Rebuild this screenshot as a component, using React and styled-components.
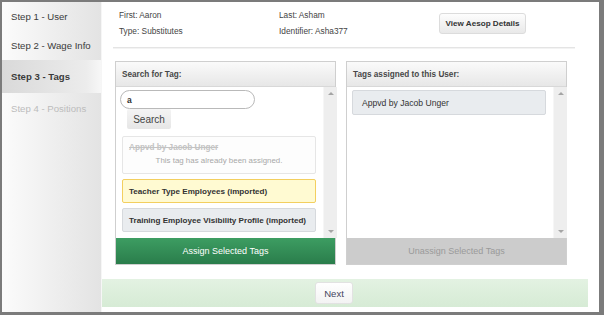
import React from "react";
import styled, { createGlobalStyle } from "styled-components";

const Global = createGlobalStyle`
  html, body { margin: 0; padding: 0; background: #fff; }
  * { box-sizing: border-box; }
  body { font-family: "Liberation Sans", Arial, sans-serif; }
`;

const Frame = styled.div`
  width: 604px;
  height: 315px;
  border-style: solid;
  border-color: #7b7b7b;
  border-width: 2px 5px 3px 2px;
  display: flex;
  background: #fff;
  overflow: hidden;
`;

const Sidebar = styled.nav`
  width: 100px;
  flex: none;
  background: linear-gradient(to right, #fbfbfb, #e3e3e3);
  border-right: 1px solid #f6f6f6;
  display: flex;
  flex-direction: column;
`;

const Step = styled.div`
  height: ${(p) => p.$h}px;
  padding-left: 9px;
  display: flex;
  align-items: center;
  font-size: 9.6px;
  color: ${(p) => (p.$disabled ? "#bcbcbc" : "#3a3a3a")};
  font-weight: ${(p) => (p.$active ? "bold" : "normal")};
  background: ${(p) =>
    p.$active ? "linear-gradient(to right, #d9d9d9, #ececec 85%, #f7f7f7)" : "transparent"};
`;

const Main = styled.main`
  flex: 1;
  display: flex;
  flex-direction: column;
  min-width: 0;
`;

const Info = styled.div`
  display: flex;
  align-items: flex-start;
  padding: 5px 0 0 17px;
`;

const InfoCol = styled.div`
  width: 160px;
  font-size: 8.3px;
  line-height: 16px;
  color: #444;
`;

const DetailsButton = styled.button`
  margin-top: 6px;
  width: 87px;
  height: 21px;
  padding: 0;
  font-family: inherit;
  font-size: 8.1px;
  font-weight: bold;
  color: #333;
  background: linear-gradient(#fdfdfd, #e9e9e9);
  border: 1px solid #dcdcdc;
  border-radius: 3px;
`;

const Separator = styled.div`
  margin: 8px 24px 0 11px;
  height: 2px;
  background: #e4e4e4;
  border-bottom: 1px solid #f3f3f3;
`;

const Panels = styled.div`
  display: flex;
  gap: 10px;
  padding-left: 13px;
  margin-top: 12px;
`;

const Panel = styled.section`
  width: 221px;
  height: 204px;
  border: 1px solid #cfcfcf;
  display: flex;
  flex-direction: column;
  background: #fff;
`;

const PanelHeader = styled.div`
  height: 25px;
  flex: none;
  padding-left: 6px;
  display: flex;
  align-items: center;
  font-size: 8.2px;
  font-weight: bold;
  color: #474747;
  background: linear-gradient(#fafafa, #e7e7e7);
  border-bottom: 1px solid #d8d8d8;
`;

const PanelBody = styled.div`
  flex: 1;
  display: flex;
  min-height: 0;
`;

const List = styled.div`
  flex: 1;
  display: flex;
  flex-direction: column;
  align-items: flex-start;
  padding: 3px 7px 0 ${(p) => p.$pl}px;
`;

const Scrollbar = styled.div`
  width: 14px;
  flex: none;
  background: #eeeeee;
  border-left: 1px solid #f6f6f6;
  display: flex;
  flex-direction: column;
  justify-content: space-between;
  align-items: center;
  padding: 5px 0 5px;
`;

const Arrow = styled.div`
  width: 0;
  height: 0;
  border-left: 3px solid transparent;
  border-right: 3px solid transparent;
  ${(p) =>
    p.$down ? "border-top: 3px solid #a5a5a5;" : "border-bottom: 3px solid #a5a5a5;"}
`;

const SearchInput = styled.div`
  width: 135px;
  height: 19px;
  border: 1px solid #b9b9b9;
  border-radius: 10px;
  padding-left: 6px;
  display: flex;
  align-items: center;
  font-size: 8.5px;
  font-weight: bold;
  color: #333;
  background: #fff;
`;

const SearchButton = styled.button`
  margin-left: 7px;
  width: 44px;
  height: 20px;
  padding: 0;
  font-family: inherit;
  font-size: 10px;
  color: #444;
  background: linear-gradient(#f4f4f4, #e6e6e6);
  border: none;
  border-radius: 2px;
`;

const DisabledTag = styled.div`
  margin: 7px 0 0 2px;
  width: 194px;
  height: 38px;
  border: 1px solid #e6e6e6;
  border-radius: 2px;
  background: #fdfdfd;
  padding: 6px 0 0 6px;
  font-size: 8.2px;
  color: #bdbdbd;
`;

const Struck = styled.div`
  font-weight: bold;
  text-decoration: line-through;
  color: #c3c3c3;
`;

const Note = styled.div`
  margin-top: 4px;
  text-align: center;
  padding-right: 6px;
  color: #a8a8a8;
  font-size: 7.9px;
`;

const Tag = styled.div`
  margin: ${(p) => p.$mt}px 0 0 ${(p) => p.$ml}px;
  width: 194px;
  height: ${(p) => p.$h}px;
  border: 1px solid ${(p) => (p.$selected ? "#f3cf5f" : "#d6d9dd")};
  border-radius: 2px;
  background: ${(p) => (p.$selected ? "#fffad2" : "#e9ecef")};
  padding-left: ${(p) => p.$pl}px;
  display: flex;
  align-items: center;
  font-size: ${(p) => (p.$bold ? "8.1px" : "8.6px")};
  font-weight: ${(p) => (p.$bold ? "bold" : "normal")};
  color: #333;
`;

const ActionButton = styled.button`
  height: 26px;
  flex: none;
  width: 100%;
  padding: 0;
  border: none;
  font-family: inherit;
  font-size: 9px;
  color: ${(p) => (p.$primary ? "#ffffff" : "#9a9a9a")};
  background: ${(p) =>
    p.$primary ? "linear-gradient(#3d9d62, #2a7d4b)" : "#cccccc"};
`;

const Footer = styled.div`
  margin: 14px 11px 0 0;
  height: 28px;
  background: linear-gradient(#e3f2e2, #d6ebd5);
  display: flex;
  align-items: center;
  padding-left: 213px;
`;

const NextButton = styled.button`
  width: 38px;
  height: 22px;
  padding: 0;
  font-family: inherit;
  font-size: 9.6px;
  color: #454560;
  background: linear-gradient(#ffffff, #f3f3f3);
  border: 1px solid #e2e2e2;
  border-radius: 3px;
`;

export default function App() {
  return (
    <>
      <Global />
      <Frame>
        <Sidebar>
          <Step $h={28}>Step 1 - User</Step>
          <Step $h={30}>Step 2 - Wage Info</Step>
          <Step $h={33} $active>Step 3 - Tags</Step>
          <Step $h={31} $disabled>Step 4 - Positions</Step>
        </Sidebar>
        <Main>
          <Info>
            <InfoCol>
              <div>First: Aaron</div>
              <div>Type: Substitutes</div>
            </InfoCol>
            <InfoCol>
              <div>Last: Asham</div>
              <div>Identifier: Asha377</div>
            </InfoCol>
            <DetailsButton>View Aesop Details</DetailsButton>
          </Info>
          <Separator />
          <Panels>
            <Panel>
              <PanelHeader>Search for Tag:</PanelHeader>
              <PanelBody>
                <List $pl={4}>
                  <SearchInput>a</SearchInput>
                  <SearchButton>Search</SearchButton>
                  <DisabledTag>
                    <Struck>Appvd by Jacob Unger</Struck>
                    <Note>This tag has already been assigned.</Note>
                  </DisabledTag>
                  <Tag $selected $bold $mt={5} $ml={2} $h={24} $pl={6}>
                    Teacher Type Employees (imported)
                  </Tag>
                  <Tag $bold $mt={5} $ml={2} $h={24} $pl={6}>
                    Training Employee Visibility Profile (imported)
                  </Tag>
                </List>
                <Scrollbar>
                  <Arrow />
                  <Arrow $down />
                </Scrollbar>
              </PanelBody>
              <ActionButton $primary>Assign Selected Tags</ActionButton>
            </Panel>
            <Panel>
              <PanelHeader>Tags assigned to this User:</PanelHeader>
              <PanelBody>
                <List $pl={5}>
                  <Tag $mt={0} $ml={0} $h={25} $pl={9}>
                    Appvd by Jacob Unger
                  </Tag>
                </List>
                <Scrollbar>
                  <Arrow />
                  <Arrow $down />
                </Scrollbar>
              </PanelBody>
              <ActionButton>Unassign Selected Tags</ActionButton>
            </Panel>
          </Panels>
          <Footer>
            <NextButton>Next</NextButton>
          </Footer>
        </Main>
      </Frame>
    </>
  );
}
